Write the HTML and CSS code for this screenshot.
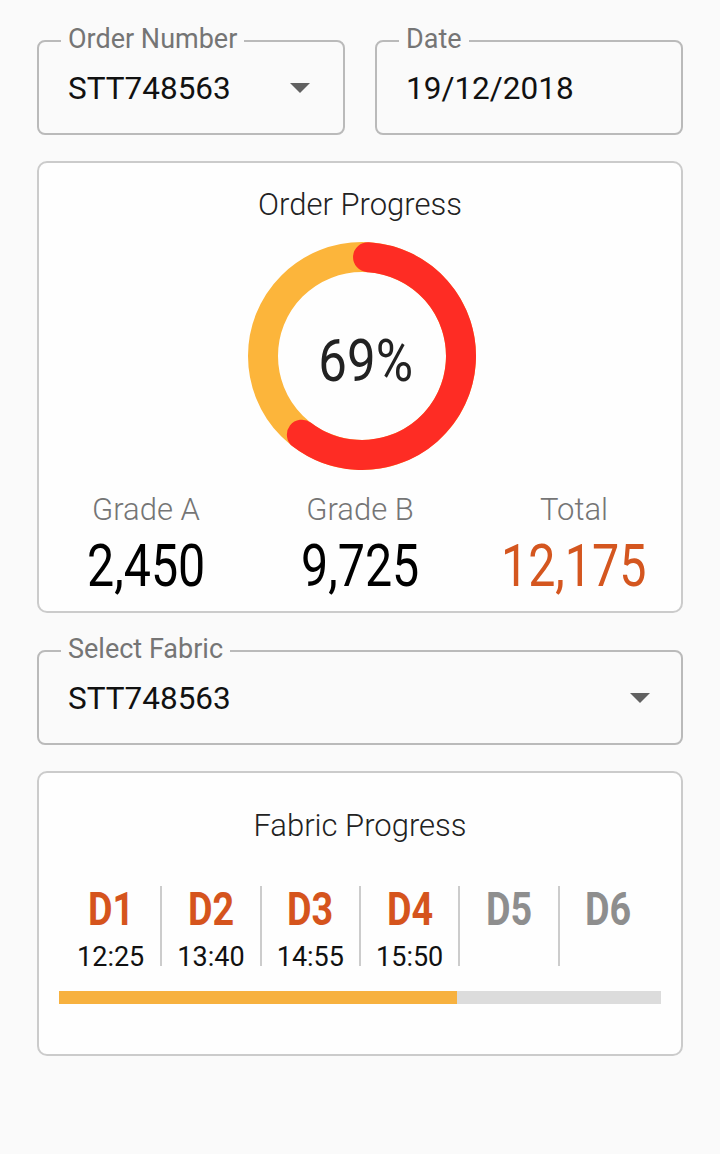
FILE: index.html
```html
<!DOCTYPE html>
<html>
<head>
<meta charset="utf-8">
<link rel="stylesheet" href="styles.css">
</head>
<body>
<main class="page">
  <div class="row">
    <fieldset class="field">
      <legend class="field-label">Order Number</legend>
      <div class="field-value">
        <span>STT748563</span>
        <span class="caret"></span>
      </div>
    </fieldset>
    <fieldset class="field">
      <legend class="field-label">Date</legend>
      <div class="field-value"><span>19/12/2018</span></div>
    </fieldset>
  </div>

  <section class="card order-card">
    <h2 class="card-title">Order Progress</h2>
    <div class="donut">
      <svg width="232" height="232" viewBox="0 0 232 232">
        <circle cx="116" cy="116" r="99" fill="none" stroke="#fcb53b" stroke-width="30"/>
        <circle cx="116" cy="116" r="99" fill="none" stroke="#fe2c24" stroke-width="30" stroke-linecap="round" stroke-dasharray="369 1000" transform="rotate(-86.5 116 116)"/>
      </svg>
      <div class="donut-value"><span class="cond">69%</span></div>
    </div>
    <div class="stats">
      <div class="stat">
        <div class="stat-label">Grade A</div>
        <div class="stat-value"><span class="cond">2,450</span></div>
      </div>
      <div class="stat">
        <div class="stat-label">Grade B</div>
        <div class="stat-value"><span class="cond">9,725</span></div>
      </div>
      <div class="stat">
        <div class="stat-label">Total</div>
        <div class="stat-value total"><span class="cond">12,175</span></div>
      </div>
    </div>
  </section>

  <fieldset class="field wide">
    <legend class="field-label">Select Fabric</legend>
    <div class="field-value">
      <span>STT748563</span>
      <span class="caret"></span>
    </div>
  </fieldset>

  <section class="card fabric-card">
    <h2 class="card-title">Fabric Progress</h2>
    <div class="steps">
      <div class="step done"><div class="step-name"><span class="cond">D1</span></div><div class="step-time">12:25</div></div>
      <div class="step done"><div class="step-name"><span class="cond">D2</span></div><div class="step-time">13:40</div></div>
      <div class="step done"><div class="step-name"><span class="cond">D3</span></div><div class="step-time">14:55</div></div>
      <div class="step done"><div class="step-name"><span class="cond">D4</span></div><div class="step-time">15:50</div></div>
      <div class="step"><div class="step-name"><span class="cond">D5</span></div><div class="step-time"></div></div>
      <div class="step"><div class="step-name"><span class="cond">D6</span></div><div class="step-time"></div></div>
    </div>
    <div class="bar"><div class="bar-fill" style="width:66.1%"></div></div>
  </section>
</main>
</body>
</html>
```

FILE: styles.css
```css
* { box-sizing: border-box; }
html, body { margin: 0; padding: 0; }
body {
  background: #fafafa;
  font-family: Roboto, "Liberation Sans", sans-serif;
  color: #111;
  width: 720px;
  height: 1154px;
}
.page {
  padding: 26px 37px 0 37px;
  display: flex;
  flex-direction: column;
}
.row {
  display: flex;
  gap: 30px;
}
.field {
  margin: 0;
  flex: 1;
  border: 2px solid #bababa;
  border-radius: 8px;
  padding: 12px 33px 25px 29px;
  min-width: 0;
}
.field-label {
  font-size: 27px;
  line-height: 26px;
  color: #757575;
  padding: 0 7px 4px;
  margin-left: -7px;
}
.field-value {
  display: flex;
  align-items: center;
  justify-content: space-between;
  height: 40px;
  font-size: 31.5px;
  color: #111;
}
.caret {
  width: 0;
  height: 0;
  border-left: 10px solid transparent;
  border-right: 10px solid transparent;
  border-top: 10px solid #616161;
}
.field.wide {
  margin-top: 23px;
  padding-right: 31px;
}
.card {
  background: #fefefe;
  border: 2px solid #cbcbcb;
  border-radius: 10px;
  margin-top: 26px;
}
.card-title {
  margin: 0;
  font-weight: 300;
  font-size: 31px;
  line-height: 40px;
  text-align: center;
  color: #222;
}
.cond {
  display: inline-block;
  transform: scaleX(0.82);
}
.order-card {
  padding: 22px 0 13px;
}
.donut {
  position: relative;
  width: 232px;
  height: 232px;
  margin: 15px auto 0;
  left: 2px;
}
.donut svg { display: block; }
.donut-value {
  position: absolute;
  inset: 0;
  display: flex;
  align-items: center;
  justify-content: center;
  font-size: 60px;
  color: #222;
  padding-left: 8px;
  padding-top: 8px;
}
.donut-value .cond { transform: scaleX(0.85); }
.stats {
  display: grid;
  grid-template-columns: repeat(3, 1fr);
  margin-top: 20px;
  text-align: center;
}
.stat-label {
  font-size: 31px;
  font-weight: 300;
  line-height: 36px;
  color: #757575;
}
.stat-value {
  font-size: 59px;
  line-height: 64px;
  margin-top: 6px;
  color: #000;
}
.stat-value.total { color: #d4561f; }
.fabric-card {
  padding: 33px 20px 50px;
}
.steps {
  display: grid;
  grid-template-columns: repeat(6, 1fr);
  margin: 40px 4px 0 2px;
}
.step {
  height: 80px;
  text-align: center;
}
.step + .step { border-left: 2px solid #cccccc; }
.step-name {
  font-size: 46px;
  font-weight: 700;
  line-height: 46px;
  color: #8e8e8e;
}
.step.done .step-name { color: #d5541d; }
.step-time {
  margin-top: 12px;
  font-size: 27px;
  line-height: 26px;
  color: #111;
}
.bar {
  margin-top: 25px;
  height: 13px;
  background: #dcdcdc;
}
.bar-fill {
  height: 100%;
  background: #f7b13f;
}
```
